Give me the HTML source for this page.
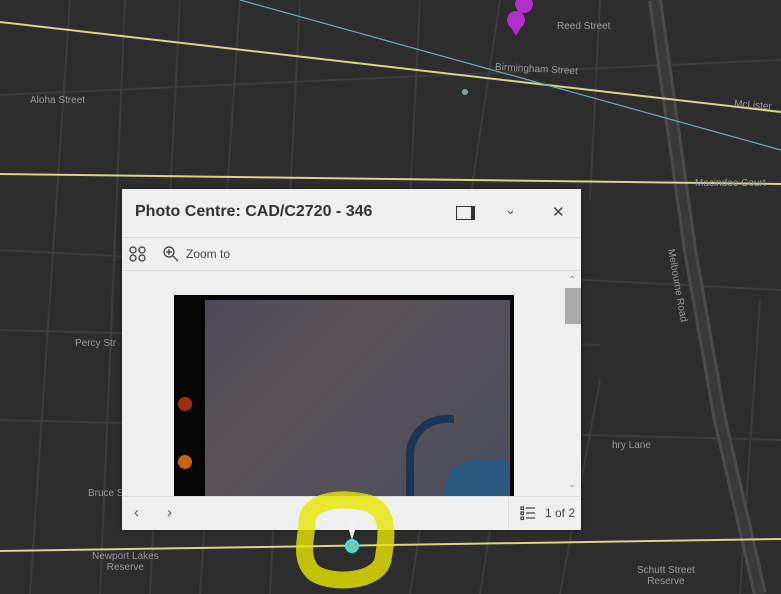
<!DOCTYPE html>
<html><head><meta charset="utf-8"><style>
body{margin:0;width:781px;height:594px;overflow:hidden;background:#2d2d2d;font-family:"Liberation Sans",sans-serif;position:relative}
.lbl{position:absolute;color:#9a9a9a;font-size:10px;white-space:nowrap}
.pop{position:absolute;left:122px;top:189px;width:459px;height:340px;background:#efefef;box-shadow:0 1px 4px rgba(0,0,0,.5)}
</style></head><body>
<svg width="781" height="594" style="position:absolute;left:0;top:0">
<g stroke="#3c3c3c" stroke-width="2" fill="none">
<path d="M0 95 L781 60"/><path d="M0 250 L781 290"/><path d="M0 330 L600 345"/><path d="M0 420 L781 440"/>
<path d="M70 0 L30 594"/><path d="M125 0 L100 594"/><path d="M180 0 L150 594"/><path d="M240 0 L200 594"/><path d="M300 0 L270 594"/><path d="M420 0 L410 200"/><path d="M500 0 L470 200"/><path d="M600 0 L590 200"/><path d="M600 380 L560 594"/><path d="M760 300 L740 594"/><path d="M420 530 L410 594"/><path d="M490 530 L480 594"/>
</g>
<path d="M655 0 L690 250 L720 420 L760 594" stroke="#4a4a4a" stroke-width="14" fill="none"/>
<path d="M655 0 L690 250 L720 420 L760 594" stroke="#383838" stroke-width="8" fill="none"/>
<path d="M0 22 L781 112" stroke="#d8d48a" stroke-width="2"/>
<path d="M0 174 L781 184" stroke="#d8d48a" stroke-width="2"/>
<path d="M0 551 L781 539" stroke="#d8d48a" stroke-width="2"/>
<path d="M240 0 L781 150" stroke="#6fa8bd" stroke-width="1.2"/>
<circle cx="465" cy="92" r="3" fill="#6fa8bd"/>
<circle cx="516" cy="20" r="9" fill="#b030c8"/><path d="M509 24 L523 24 L516 36Z" fill="#b030c8"/>
<circle cx="524" cy="4" r="9" fill="#b030c8"/>
</svg>
<div class="lbl" style="left:557px;top:21px">Reed Street</div>
<div class="lbl" style="left:495px;top:64px;transform:rotate(3deg)">Birmingham Street</div>
<div class="lbl" style="left:734px;top:100px;transform:rotate(5deg)">McLister</div>
<div class="lbl" style="left:30px;top:95px">Aloha Street</div>
<div class="lbl" style="left:695px;top:178px">Macindoe Court</div>
<div class="lbl" style="left:640px;top:280px;transform:rotate(80deg)">Melbourne Road</div>
<div class="lbl" style="left:75px;top:338px">Percy Str</div>
<div class="lbl" style="left:612px;top:440px">hry Lane</div>
<div class="lbl" style="left:88px;top:488px">Bruce S</div>
<div class="lbl" style="left:92px;top:551px;text-align:center">Newport Lakes<br>Reserve</div>
<div class="lbl" style="left:637px;top:565px;text-align:center">Schutt Street<br>Reserve</div>
<div class="pop">
 <div style="height:48px;border-bottom:1px solid #ddd;position:relative">
  <div style="position:absolute;left:13px;top:14px;font-size:16px;font-weight:bold;color:#333">Photo Centre: CAD/C2720 - 346</div>
  <div style="position:absolute;left:334px;top:17px;width:14px;height:12px;border:1.5px solid #333;border-right-width:4px"></div>
  <div style="position:absolute;left:383px;top:13px;font-size:13px;color:#555">&#8964;</div>
  <div style="position:absolute;left:430px;top:14px;font-size:15px;color:#444">✕</div>
 </div>
 <div style="height:32px;border-bottom:1px solid #ddd;position:relative">
  <svg style="position:absolute;left:7px;top:8px" width="18" height="16"><g fill="none" stroke="#333" stroke-width="1.2"><circle cx="4" cy="4" r="3"/><circle cx="13" cy="4" r="3"/><circle cx="4" cy="12" r="3"/><circle cx="13" cy="12" r="3"/></g></svg>
  <svg style="position:absolute;left:41px;top:8px" width="16" height="16"><g fill="none" stroke="#333" stroke-width="1.2"><circle cx="6" cy="6" r="5"/><path d="M10 10 L15 15M6 3V9M3 6H9"/></g></svg>
  <div style="position:absolute;left:64px;top:9px;font-size:12px;color:#444">Zoom to</div>
 </div>
 <div style="position:absolute;left:446px;top:86px;font-size:10px;color:#999">&#8963;</div>
 <div style="position:absolute;left:443px;top:99px;width:16px;height:36px;background:#aaa"></div>
 <div style="position:absolute;left:446px;top:290px;font-size:10px;color:#999">&#8964;</div>
 <div style="position:absolute;left:52px;top:106px;width:340px;height:201px;background:#050505;overflow:hidden">
  <div style="position:absolute;left:31px;top:5px;width:305px;height:196px;background:linear-gradient(135deg,#4d4a55 0%,#5a5358 35%,#55505a 60%,#4a4f5c 100%)"></div>
  <div style="position:absolute;left:232px;top:120px;width:40px;height:81px;border:8px solid #1d3550;border-right:none;border-radius:40px 0 0 0"></div>
  <div style="position:absolute;left:270px;top:165px;width:66px;height:36px;background:#2a5a80;border-radius:30px 0 0 0"></div>
  <div style="position:absolute;left:4px;top:102px;width:14px;height:14px;border-radius:50%;background:#a03010"></div>
  <div style="position:absolute;left:4px;top:160px;width:14px;height:14px;border-radius:50%;background:#d06010"></div>
 </div>
 <div style="position:absolute;left:0;top:307px;width:459px;height:33px;border-top:1px solid #ddd;background:#efefef">
  <div style="position:absolute;left:12px;top:7px;font-size:15px;color:#555">‹</div>
  <div style="position:absolute;left:45px;top:7px;font-size:15px;color:#555">›</div>
  <div style="position:absolute;left:386px;top:0;height:33px;border-left:1px solid #ddd"></div>
  <svg style="position:absolute;left:398px;top:9px" width="16" height="15"><g stroke="#444" fill="none" stroke-width="1.2"><rect x="1" y="1" width="2.5" height="2.5"/><rect x="1" y="6" width="2.5" height="2.5"/><rect x="1" y="11" width="2.5" height="2.5"/><path d="M6 2H15M6 7H15M6 12H15"/></g></svg>
  <div style="position:absolute;left:423px;top:9px;font-size:12px;color:#444">1 of 2</div>
 </div>
</div>
<svg width="781" height="594" style="position:absolute;left:0;top:0">
<path d="M307 525 C305 500 340 496 368 503 C392 512 386 540 383 560 C378 582 332 585 314 573 C300 560 305 542 307 525Z" fill="none" stroke="#e8e600" stroke-width="17" opacity=".8"/>
<path d="M346 520 L358 520 L352 540Z" fill="#f2f2f2"/>
<circle cx="352" cy="546" r="6" fill="#7fbfb0" stroke="#2ee" stroke-width="2"/>
</svg>
</body></html>
